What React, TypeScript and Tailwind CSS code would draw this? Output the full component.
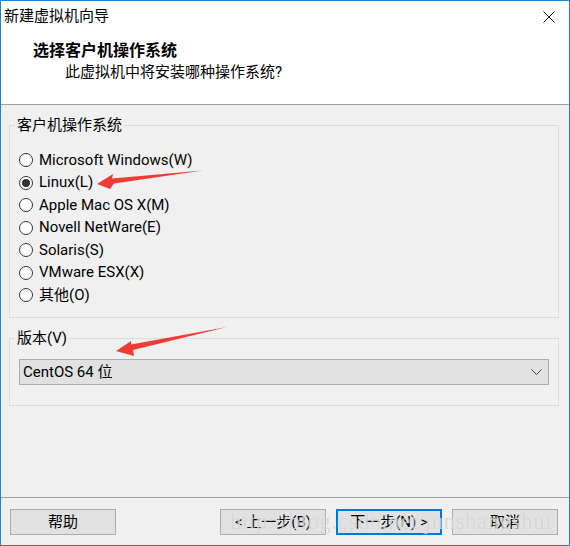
import React from "react";

// Radio row of the OS list
interface RadioProps {
	label: string;
	checked?: boolean;
}

const Radio: React.FC<RadioProps> = ({ label, checked }) => {
	return (
		<div className="h-[22.5px] flex items-center gap-[6px]">
			<span className="w-[14px] h-[14px] rounded-full border border-[#333333] bg-white flex items-center justify-center">
				{checked && <span className="w-[8px] h-[8px] rounded-full bg-[#333333]" />}
			</span>
			<span className="text-[15px] leading-none">{label}</span>
		</div>
	);
};

interface ButtonProps {
	label: string;
	primary?: boolean;
}

const Button: React.FC<ButtonProps> = ({ label, primary }) => {
	return (
		<div
			className={`w-[106px] h-[26px] bg-[#e1e1e1] flex items-center justify-center text-[15px] leading-none ${
				primary ? "border-2 border-[#0078d7]" : "border border-[#adadad]"
			}`}
		>
			{label}
		</div>
	);
};

const osList = [
	"Microsoft Windows(W)",
	"Linux(L)",
	"Apple Mac OS X(M)",
	"Novell NetWare(E)",
	"Solaris(S)",
	"VMware ESX(X)",
	"其他(O)",
];

export default function App() {
	return (
		<div className="relative w-[570px] h-[546px] overflow-hidden border border-[#1883d7] bg-[#f0f0f0] flex flex-col text-black font-['Roboto','Noto_Sans_CJK_SC',sans-serif]">
			{/* Title bar */}
			<div className="h-[31px] bg-white flex items-center justify-between pl-[3px] pr-[14px]">
				<span className="text-[15px] leading-none">新建虚拟机向导</span>
				<svg width="12" height="12" viewBox="0 0 12 12">
					<path d="M0.5 0.5 L11.5 11.5 M11.5 0.5 L0.5 11.5" stroke="#111" strokeWidth="1" />
				</svg>
			</div>

			{/* Header */}
			<div className="h-[72px] bg-white pt-[9px]">
				<div className="pl-[32px] text-[16px] font-bold leading-[20px]">选择客户机操作系统</div>
				<div className="pl-[64px] mt-[1px] text-[15px] leading-[20px]">此虚拟机中将安装哪种操作系统?</div>
			</div>
			<div className="h-px bg-[#a0a0a0]" />

			{/* Body */}
			<div className="flex-1 flex flex-col pl-[8px] pr-[10px]">
				<fieldset className="mt-[10px] h-[203px] border border-[#dcdcdc]">
					<legend className="ml-[5px] px-[2px] text-[15px] leading-[21px]">客户机操作系统</legend>
					<div className="pt-[13px] pl-[9px] flex flex-col">
						{osList.map((os) => (
							<Radio key={os} label={os} checked={os === "Linux(L)"} />
						))}
					</div>
				</fieldset>

				<fieldset className="mt-[10px] h-[78px] border border-[#dcdcdc]">
					<legend className="ml-[5px] px-[2px] text-[15px] leading-[21px]">版本(V)</legend>
					<div className="mt-[10px] mx-[9px] h-[26px] bg-[#e1e1e1] border border-[#adadad] flex items-center justify-between pl-[3px] pr-[6px]">
						<span className="text-[15px] leading-none">CentOS 64 位</span>
						<svg width="11" height="6" viewBox="0 0 11 6">
							<path d="M0.5 0.5 L5.5 5.5 L10.5 0.5" fill="none" stroke="#444" strokeWidth="1" />
						</svg>
					</div>
				</fieldset>
			</div>

			{/* Footer */}
			<div className="h-px bg-[#a0a0a0]" />
			<div className="h-[47px] flex pt-[11px] pl-[9px] pr-[11px]">
				<Button label="帮助" />
				<div className="ml-auto flex gap-[10px]">
					<Button label="< 上一步(B)" />
					<Button label="下一步(N) >" primary />
					<Button label="取消" />
				</div>
			</div>

			{/* Watermark */}
			<span className="absolute left-[229px] top-[509px] text-[23px] leading-none tracking-[0.5px] text-[rgba(175,175,175,0.45)] [text-shadow:0_0_1px_rgba(255,255,255,0.8)] font-['Liberation_Serif',serif] pointer-events-none">
				http://blog.csdn.net/junshangshui
			</span>

			{/* Red annotation arrows */}
			<svg className="absolute -left-px -top-px pointer-events-none" width="570" height="546">
				<polygon points="97,184 113,174 112,178.5 203,170.5 114,183.5 110,189" fill="#ee3b34" />
				<polygon points="116,351 131,341 131,344.5 227,327 133,350 134,356" fill="#ee3b34" />
			</svg>
		</div>
	);
}
